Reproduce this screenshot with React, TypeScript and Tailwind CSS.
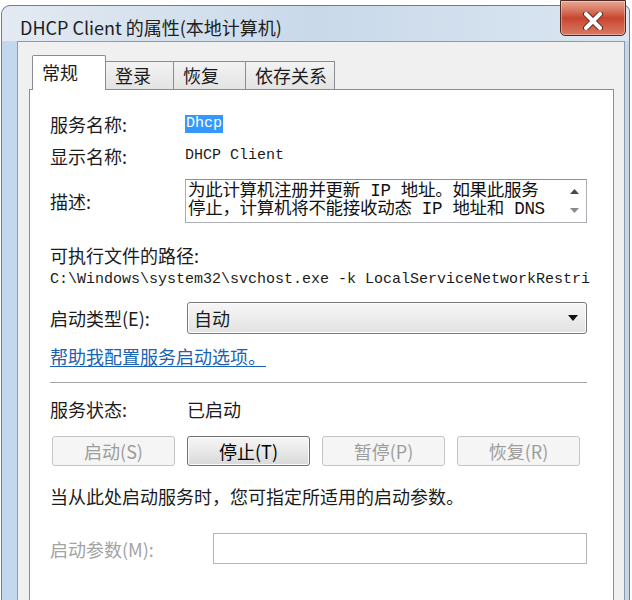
const cjk = "font-['Noto_Sans_CJK_SC','Noto_Sans',sans-serif]";
const mono = "font-['Liberation_Mono','Noto_Sans_CJK_SC',monospace]";

function Tab({ label, width, active }: { label: string; width: string; active?: boolean }) {
  if (active) {
    return (
      <div
        className={`${width} h-[35px] -mb-px relative z-10 bg-white border border-b-0 border-[#898c95] rounded-t-[2px] pl-[9px] pt-[5px] text-[18px] leading-[22px]`}
      >
        {label}
      </div>
    );
  }
  return (
    <div
      className={`${width} h-[28px] mt-[7px] bg-gradient-to-b from-[#f3f3f3] to-[#e3e3e3] border border-b-0 border-[#898c95] -ml-px pl-[9px] pt-[2px] text-[18px] leading-[22px]`}
    >
      {label}
    </div>
  );
}

function Btn({ label, enabled }: { label: string; enabled?: boolean }) {
  return (
    <div
      className={
        enabled
          ? "w-[123px] h-[30px] flex items-center justify-center rounded-[3px] border border-[#707070] bg-gradient-to-b from-[#f6f6f6] via-[#e8e8e8] to-[#d9d9d9] text-[18px] text-black shadow-[inset_0_0_0_1px_#fbfbfb]"
          : "w-[123px] h-[30px] flex items-center justify-center rounded-[3px] border border-[#c4c4c4] bg-[#f5f5f5] text-[18px] text-[#9d9d9d]"
      }
    >
      {label}
    </div>
  );
}

export default function App() {
  return (
    <div className={`w-[632px] h-[600px] overflow-hidden bg-white pt-[5px] pl-[1px] ${cjk} text-[#1b1b1b]`}>
      <div className="relative h-[640px] w-[629px] rounded-tl-[9px] rounded-tr-[6px] border border-[#6f7d8e] bg-gradient-to-r from-[#c2d8ef] via-[#d7e3ef] to-[#c6d7ea] flex flex-col">
        {/* title bar */}
        <div className="h-[48px] flex items-center pl-[18px] pt-[8px] text-[18px] text-[#202020] bg-gradient-to-r from-[#e3eaf2] via-[#c9d9ea] to-[#dbe6f1] rounded-tl-[9px] rounded-tr-[6px]">
          DHCP Client 的属性(本地计算机)
        </div>

        {/* close button */}
        <div className="absolute -top-[6px] right-[3px] w-[66px] h-[36px] rounded-b-[5px] border border-[#4f2a24] bg-gradient-to-b from-[#e6a996] via-[#c9452f] to-[#d87a62] flex items-center justify-center pt-[5px] shadow-[inset_0_0_0_1px_rgba(255,255,255,0.35)]">
          <svg width="20" height="18" viewBox="0 0 20 18">
            <path d="M3 2 L17 16 M17 2 L3 16" stroke="#5b2a22" strokeWidth="6" strokeLinecap="round" />
            <path d="M3 2 L17 16 M17 2 L3 16" stroke="#ffffff" strokeWidth="4" strokeLinecap="round" />
          </svg>
        </div>

        {/* client area */}
        <div className="ml-[15px] mr-[4px] flex-1 border border-[#8d9aab] bg-[#f0f0f0] pl-[11px] pr-[10px] pt-[12px]">
          <div className="flex items-end pl-[3px] relative">
            <Tab label="常规" width="w-[74px]" active />
            <Tab label="登录" width="w-[69px]" />
            <Tab label="恢复" width="w-[73px]" />
            <Tab label="依存关系" width="w-[90px]" />
          </div>

          <div className="h-[560px] bg-white border border-[#898c95] pl-[20px] pr-[26px] pt-[23px] text-[18px] leading-[22px]">
            <div className="flex h-[22px] items-center">
              <div className="w-[135px]">服务名称:</div>
              <span className={`${mono} text-[15px] bg-[#3399ff] text-white px-[1px] leading-[18px]`}>Dhcp</span>
            </div>

            <div className="flex h-[22px] items-center mt-[10px]">
              <div className="w-[135px]">显示名称:</div>
              <span className={`${mono} text-[15px]`}>DHCP Client</span>
            </div>

            <div className="flex items-center mt-[12px]">
              <div className="w-[135px]">描述:</div>
              <div className="flex-1 h-[44px] border border-[#abadb3] border-t-[#8e8f8f] flex">
                <div className={`flex-1 pl-[2px] pt-[2px] ${mono} text-[17.5px] leading-[18px] tracking-[-0.3px] text-[#111] whitespace-nowrap overflow-hidden`}>
                  <div>为此计算机注册并更新 IP 地址。如果此服务</div>
                  <div>停止，计算机将不能接收动态 IP 地址和 DNS</div>
                </div>
                <div className="w-[24px] flex flex-col items-center justify-between py-[9px]">
                  <svg width="9" height="5" viewBox="0 0 9 5">
                    <path d="M0 5 L4.5 0 L9 5 Z" fill="#4a4a4a" />
                  </svg>
                  <svg width="9" height="5" viewBox="0 0 9 5">
                    <path d="M0 0 L4.5 5 L9 0 Z" fill="#8a8a8a" />
                  </svg>
                </div>
              </div>
            </div>

            <div className="mt-[21px]">可执行文件的路径:</div>
            <div className={`${mono} text-[15px] leading-[20px] mt-[4px] whitespace-nowrap -mr-[20px] overflow-hidden`}>
              C:\Windows\system32\svchost.exe -k LocalServiceNetworkRestri
            </div>

            <div className="flex items-center mt-[12px]">
              <div className="w-[137px]">启动类型(E):</div>
              <div className="flex-1 h-[32px] rounded-[3px] border border-[#7a7a7a] bg-gradient-to-b from-[#f7f7f7] to-[#e2e2e2] flex items-center pl-[6px] pr-[8px] shadow-[inset_0_0_0_1px_#fdfdfd]">
                <span className="flex-1">自动</span>
                <svg width="10" height="6" viewBox="0 0 10 6">
                  <path d="M0 0 L10 0 L5 6 Z" fill="#111" />
                </svg>
              </div>
            </div>

            <div className="mt-[11px] h-[22px]">
              <span className="text-[#1a62b3] underline underline-offset-[2px] decoration-[#1a62b3]">帮助我配置服务启动选项。</span>
            </div>

            <div className="mt-[15px] h-[2px] border-t border-t-[#a5a5a5] border-b border-b-white" />

            <div className="flex h-[22px] items-center mt-[14px]">
              <div className="w-[137px]">服务状态:</div>
              <span>已启动</span>
            </div>

            <div className="flex mt-[16px] pl-[2px] gap-[12px]">
              <Btn label="启动(S)" />
              <Btn label="停止(T)" enabled />
              <Btn label="暂停(P)" />
              <Btn label="恢复(R)" />
            </div>

            <div className="mt-[19px] h-[22px] whitespace-nowrap">当从此处启动服务时，您可指定所适用的启动参数。</div>

            <div className="flex items-center mt-[26px]">
              <div className="w-[163px] text-[#a3a3a3]">启动参数(M):</div>
              <div className="flex-1 h-[31px] border border-[#b5b5b5] bg-white" />
            </div>
          </div>
        </div>
      </div>
    </div>
  );
}
